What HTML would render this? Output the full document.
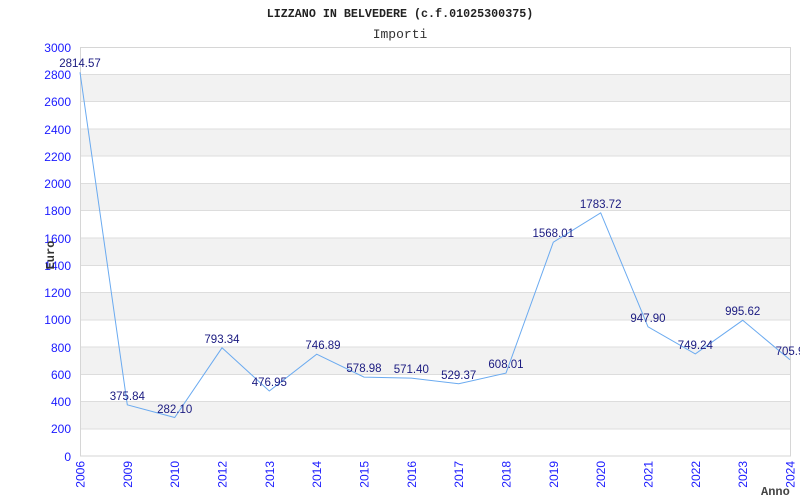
<!DOCTYPE html>
<html><head><meta charset="utf-8"><style>
html,body{margin:0;padding:0;background:#fff;width:800px;height:500px;overflow:hidden}
</style></head><body>
<svg width="800" height="500" xmlns="http://www.w3.org/2000/svg" font-family="Liberation Sans, sans-serif">
<rect width="800" height="500" fill="#fff"/>
<g fill="#f2f2f2">
<rect x="80" y="74.3" width="710" height="27.3"/>
<rect x="80" y="128.8" width="710" height="27.3"/>
<rect x="80" y="183.3" width="710" height="27.3"/>
<rect x="80" y="237.9" width="710" height="27.3"/>
<rect x="80" y="292.4" width="710" height="27.3"/>
<rect x="80" y="347" width="710" height="27.3"/>
<rect x="80" y="401.5" width="710" height="27.3"/>
</g>
<g stroke="#dddddd" stroke-width="1">
<line x1="80" y1="74.5" x2="790" y2="74.5"/><line x1="80" y1="101.5" x2="790" y2="101.5"/>
<line x1="80" y1="129" x2="790" y2="129"/><line x1="80" y1="156" x2="790" y2="156"/>
<line x1="80" y1="183.5" x2="790" y2="183.5"/><line x1="80" y1="210.5" x2="790" y2="210.5"/>
<line x1="80" y1="238" x2="790" y2="238"/><line x1="80" y1="265.5" x2="790" y2="265.5"/>
<line x1="80" y1="292.5" x2="790" y2="292.5"/><line x1="80" y1="320" x2="790" y2="320"/>
<line x1="80" y1="347" x2="790" y2="347"/><line x1="80" y1="374.5" x2="790" y2="374.5"/>
<line x1="80" y1="401.5" x2="790" y2="401.5"/><line x1="80" y1="429" x2="790" y2="429"/>
</g>
<rect x="80.5" y="47.5" width="710" height="408.5" fill="none" stroke="#d6d6d6"/>
<text x="400" y="17" text-anchor="middle" font-family="Liberation Mono, monospace" font-weight="bold" font-size="11.7" fill="#222">LIZZANO IN BELVEDERE (c.f.01025300375)</text>
<text x="400" y="38" text-anchor="middle" font-family="Liberation Mono, monospace" font-size="13" fill="#333">Importi</text>
<g font-size="12" fill="#1a1aff" text-anchor="end">
<text x="71" y="52">3000</text><text x="71" y="79">2800</text><text x="71" y="106">2600</text>
<text x="71" y="134">2400</text><text x="71" y="161">2200</text><text x="71" y="188">2000</text>
<text x="71" y="215">1800</text><text x="71" y="243">1600</text><text x="71" y="270">1400</text>
<text x="71" y="297">1200</text><text x="71" y="324">1000</text><text x="71" y="352">800</text>
<text x="71" y="379">600</text><text x="71" y="406">400</text><text x="71" y="433">200</text>
<text x="71" y="461">0</text>
</g>
<text transform="translate(54,255) rotate(-90)" text-anchor="middle" font-family="Liberation Mono, monospace" font-weight="bold" font-size="12" fill="#333">Euro</text>
<g font-size="12" fill="#1a1aff" text-anchor="end">
<text transform="translate(84.5,461) rotate(-90)">2006</text>
<text transform="translate(131.8,461) rotate(-90)">2009</text>
<text transform="translate(179.2,461) rotate(-90)">2010</text>
<text transform="translate(226.5,461) rotate(-90)">2012</text>
<text transform="translate(273.8,461) rotate(-90)">2013</text>
<text transform="translate(321.2,461) rotate(-90)">2014</text>
<text transform="translate(368.5,461) rotate(-90)">2015</text>
<text transform="translate(415.8,461) rotate(-90)">2016</text>
<text transform="translate(463.2,461) rotate(-90)">2017</text>
<text transform="translate(510.5,461) rotate(-90)">2018</text>
<text transform="translate(557.8,461) rotate(-90)">2019</text>
<text transform="translate(605.2,461) rotate(-90)">2020</text>
<text transform="translate(652.5,461) rotate(-90)">2021</text>
<text transform="translate(699.8,461) rotate(-90)">2022</text>
<text transform="translate(747.2,461) rotate(-90)">2023</text>
<text transform="translate(794.5,461) rotate(-90)">2024</text>
</g>
<text x="761" y="495" font-family="Liberation Mono, monospace" font-weight="bold" font-size="12" fill="#444">Anno</text>
<polyline fill="none" stroke="#6aaaf0" stroke-width="1" points="80,72.3 127.3,404.8 174.7,417.5 222,347.8 269.3,391 316.7,354.2 364,377.1 411.3,378.1 458.7,383.8 506,373.1 553.3,242.2 600.7,212.8 648,326.8 695.3,353.9 742.7,320.3 790,359.8"/>
<g font-size="11.5" fill="#1a1a80" text-anchor="middle">
<text x="80" y="67">2814.57</text>
<text x="127.3" y="400">375.84</text>
<text x="174.7" y="413">282.10</text>
<text x="222" y="343">793.34</text>
<text x="269.3" y="386">476.95</text>
<text x="323" y="349">746.89</text>
<text x="364" y="372">578.98</text>
<text x="411.3" y="373">571.40</text>
<text x="458.7" y="379">529.37</text>
<text x="506" y="368">608.01</text>
<text x="553.3" y="237">1568.01</text>
<text x="600.7" y="208">1783.72</text>
<text x="648" y="322">947.90</text>
<text x="695.3" y="349">749.24</text>
<text x="742.7" y="315">995.62</text>
<text x="790" y="355">705.9</text>
</g>
</svg>
</body></html>
